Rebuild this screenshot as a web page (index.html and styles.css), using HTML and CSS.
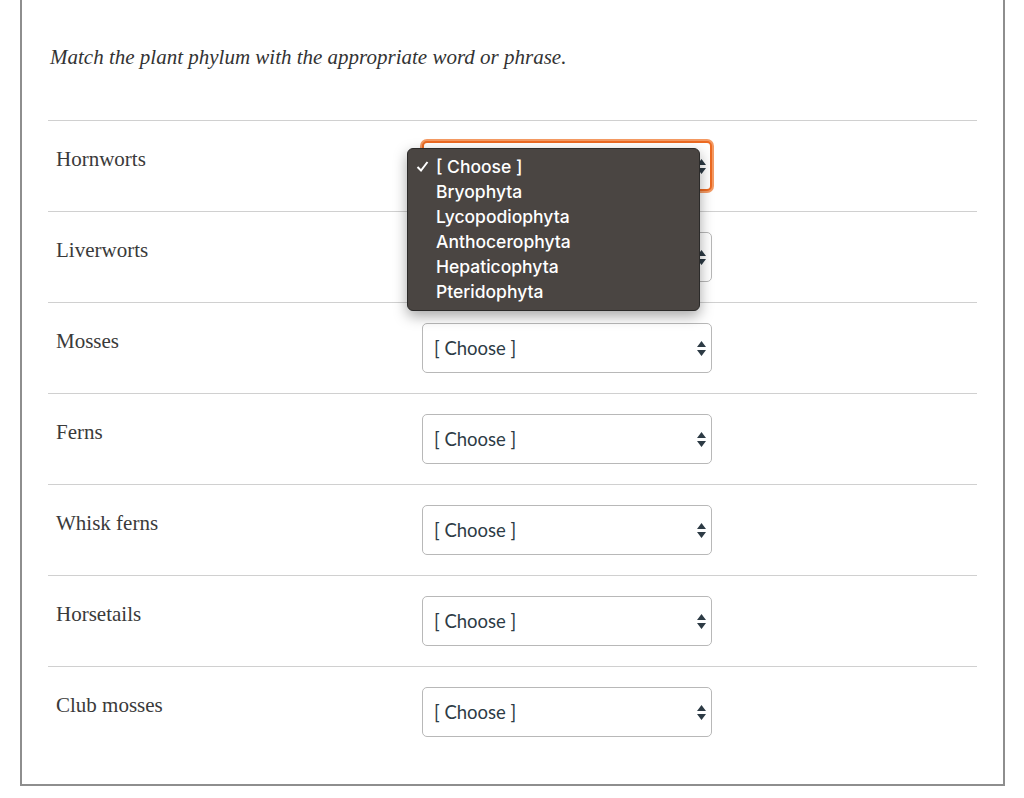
FILE: index.html
```html
<!DOCTYPE html>
<html lang="en">
<head>
  <meta charset="UTF-8">
  <meta name="viewport" content="width=device-width, initial-scale=1.0">
  <title>Matching question</title>
  <link rel="stylesheet" href="styles.css">
</head>
<body>
  <div class="panel">
    <p class="prompt">Match the plant phylum with the appropriate word or phrase.</p>

    <!-- answer rows -->
    <div class="row">
      <div class="label">Hornworts</div>
      <div class="select focused">
        <span>[ Choose ]</span>
        <svg class="arrows" width="9" height="15" viewBox="0 0 9 15"><path d="M4.5 0 L9 6 L0 6 Z M0 9 L9 9 L4.5 15 Z"/></svg>
        <!-- open option list -->
        <div class="menu">
          <div class="option checked"><svg class="tick" width="13" height="13" viewBox="0 0 13 13"><path d="M1.5 7 L5 10.5 L11.5 2"/></svg>[ Choose ]</div>
          <div class="option">Bryophyta</div>
          <div class="option">Lycopodiophyta</div>
          <div class="option">Anthocerophyta</div>
          <div class="option">Hepaticophyta</div>
          <div class="option">Pteridophyta</div>
        </div>
      </div>
    </div>
    <div class="row">
      <div class="label">Liverworts</div>
      <div class="select">
        <span>[ Choose ]</span>
        <svg class="arrows" width="9" height="15" viewBox="0 0 9 15"><path d="M4.5 0 L9 6 L0 6 Z M0 9 L9 9 L4.5 15 Z"/></svg>
      </div>
    </div>
    <div class="row">
      <div class="label">Mosses</div>
      <div class="select">
        <span>[ Choose ]</span>
        <svg class="arrows" width="9" height="15" viewBox="0 0 9 15"><path d="M4.5 0 L9 6 L0 6 Z M0 9 L9 9 L4.5 15 Z"/></svg>
      </div>
    </div>
    <div class="row">
      <div class="label">Ferns</div>
      <div class="select">
        <span>[ Choose ]</span>
        <svg class="arrows" width="9" height="15" viewBox="0 0 9 15"><path d="M4.5 0 L9 6 L0 6 Z M0 9 L9 9 L4.5 15 Z"/></svg>
      </div>
    </div>
    <div class="row">
      <div class="label">Whisk ferns</div>
      <div class="select">
        <span>[ Choose ]</span>
        <svg class="arrows" width="9" height="15" viewBox="0 0 9 15"><path d="M4.5 0 L9 6 L0 6 Z M0 9 L9 9 L4.5 15 Z"/></svg>
      </div>
    </div>
    <div class="row">
      <div class="label">Horsetails</div>
      <div class="select">
        <span>[ Choose ]</span>
        <svg class="arrows" width="9" height="15" viewBox="0 0 9 15"><path d="M4.5 0 L9 6 L0 6 Z M0 9 L9 9 L4.5 15 Z"/></svg>
      </div>
    </div>
    <div class="row">
      <div class="label">Club mosses</div>
      <div class="select">
        <span>[ Choose ]</span>
        <svg class="arrows" width="9" height="15" viewBox="0 0 9 15"><path d="M4.5 0 L9 6 L0 6 Z M0 9 L9 9 L4.5 15 Z"/></svg>
      </div>
    </div>
  </div>
</body>
</html>
```

FILE: styles.css
```css
body {
  margin: 0;
  background: #fff;
  font-family: "Liberation Serif", "Times New Roman", serif;
  color: #2d2d2d;
}
.panel {
  margin: 0 19px 0 20px;
  border: 2px solid #8e8e8e;
  border-top: none;
  padding: 0 26px 27px 26px;
}
.prompt {
  margin: 0;
  padding: 45px 0 0 2px;
  height: 75px;
  font-size: 21px;
  line-height: 24px;
  font-style: italic;
  color: #333;
}
.row {
  display: flex;
  align-items: flex-start;
  border-top: 1px solid #d0d0d0;
  padding: 20px 0 20px 8px;
}
.label {
  width: 366px;
  flex-shrink: 0;
  margin-top: 6px;
  font-size: 21px;
  line-height: 24px;
  color: #3a3a3a;
}
.select {
  position: relative;
  display: flex;
  align-items: center;
  justify-content: space-between;
  box-sizing: border-box;
  width: 290px;
  height: 50px;
  padding: 0 5px 0 11px;
  border: 1px solid #b8b8b8;
  border-radius: 5px;
  background: #fff;
  font-family: Lato, "Open Sans", sans-serif;
  font-size: 18.5px;
  color: #2d3b45;
}
.select .arrows {
  fill: #2d3b45;
}
.focused {
  border: 2px solid #ec6a22;
  box-shadow: 0 0 0 2px #f49a63;
  padding-left: 10px;
  padding-right: 4px;
}
.menu {
  position: absolute;
  left: -17px;
  top: 5px;
  width: 293px;
  box-sizing: border-box;
  padding: 5px 0 6px 0;
  background: #4a4542;
  border: 1px solid #2b2a29;
  border-radius: 6px;
  box-shadow: 0 5px 14px rgba(0, 0, 0, 0.35);
  font-family: Inter, "Liberation Sans", sans-serif;
  font-weight: 500;
  font-size: 17.5px;
  color: #fff;
  z-index: 10;
}
.option {
  position: relative;
  height: 25px;
  line-height: 25px;
  padding-left: 28px;
}
.tick {
  position: absolute;
  left: 8px;
  top: 6px;
  fill: none;
  stroke: #fff;
  stroke-width: 2;
}
```
